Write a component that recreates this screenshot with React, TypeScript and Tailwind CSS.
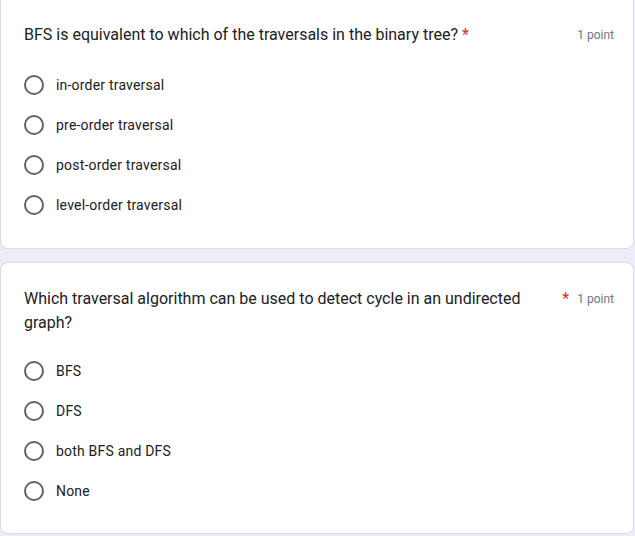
const questions = [
  {
    title: 'BFS is equivalent to which of the traversals in the binary tree?',
    options: ['in-order traversal', 'pre-order traversal', 'post-order traversal', 'level-order traversal'],
  },
  {
    title: 'Which traversal algorithm can be used to detect cycle in an undirected graph?',
    options: ['BFS', 'DFS', 'both BFS and DFS', 'None'],
  },
];

const Radio = ({ label }: { label: string }) => (
  <label className="flex h-10 items-center cursor-pointer">
    <span className="box-border h-5 w-5 shrink-0 rounded-full border-2 border-[#5f6368]" />
    <span className="ml-3 text-sm leading-5 tracking-[0.2px] text-[#202124]">{label}</span>
  </label>
);

const QuestionCard = ({ title, options, first }: { title: string; options: string[]; first?: boolean }) => (
  <div
    className={
      first
        ? 'rounded-b-lg border-x border-b border-[#dadce0] bg-white pl-[23px] pr-[19px] pt-[23px] pb-[23px]'
        : 'mt-[13px] rounded-lg border border-[#dadce0] bg-white pl-[23px] pr-[19px] pt-6 pb-[22px]'
    }
  >
    <div className="flex items-start">
      <div className="flex min-w-0 flex-1 items-start pr-2">
        <span className="text-base leading-6 text-[#202124]">{title}</span>
        <span className="shrink-0 pl-1 text-base leading-6 text-[#d93025]">*</span>
      </div>
      <span className="whitespace-nowrap text-xs leading-6 text-[#70757a]">1 point</span>
    </div>
    <div className={first ? 'mt-[18px]' : 'mt-4'}>
      {options.map(o => <Radio key={o} label={o} />)}
    </div>
  </div>
);

export default function App() {
  return (
    <div className="min-h-[536px] w-[635px] overflow-hidden bg-[#f0ebf8] font-['Roboto',sans-serif]">
      <div className="w-[634px]">
        {questions.map((q, i) => (
          <QuestionCard key={i} title={q.title} options={q.options} first={i === 0} />
        ))}
      </div>
    </div>
  );
}
